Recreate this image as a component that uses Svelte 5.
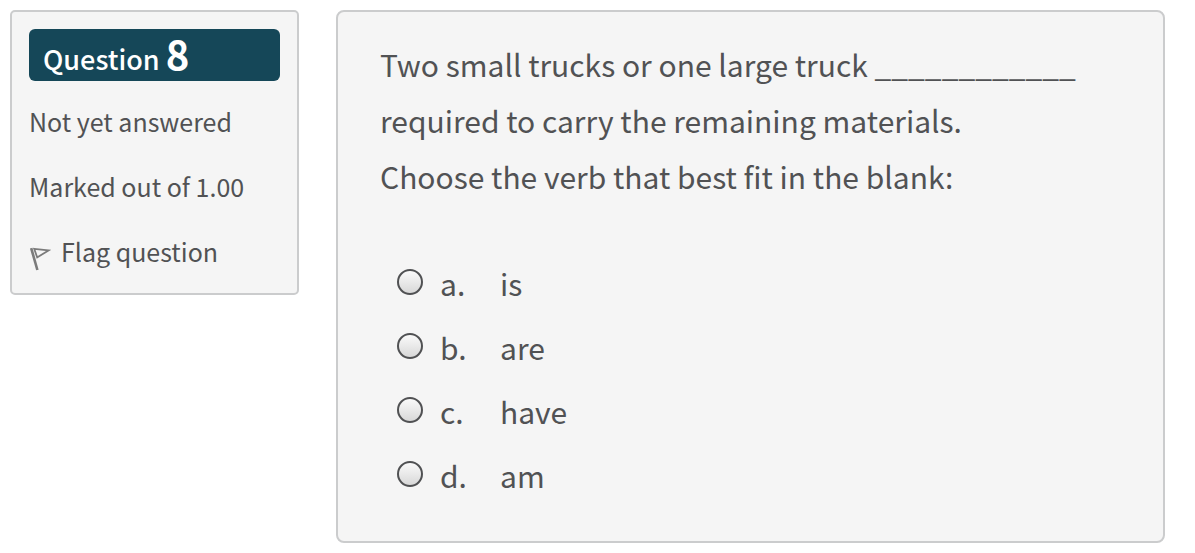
<script>
  const answers = [
    { letter: 'a.', text: 'is' },
    { letter: 'b.', text: 'are' },
    { letter: 'c.', text: 'have' },
    { letter: 'd.', text: 'am' }
  ];
  let selected = $state(null);
</script>

<main class="question">
  <aside class="info">
    <h3 class="number">Question <span>8</span></h3>
    <p>Not yet answered</p>
    <p>Marked out of 1.00</p>
    <a class="flag" href="#flag">
      <svg width="22" height="24" viewBox="0 0 22 24" aria-hidden="true">
        <path d="M2.2 1.2 8.4 23" fill="none" stroke="#7b7b7b" stroke-width="2.6" />
        <path d="M5.2 1.8 19.5 3.4 8.2 10.4Z" fill="none" stroke="#7b7b7b" stroke-width="1.8" />
      </svg>
      <span>Flag question</span>
    </a>
  </aside>

  <section class="content">
    <p class="prompt">
      Two small trucks or one large truck ____________<br />
      required to carry the remaining materials.<br />
      Choose the verb that best fit in the blank:
    </p>
    <div class="answers" role="radiogroup" aria-label="Answers">
      {#each answers as answer}
        <label class="answer">
          <input type="radio" name="answer" value={answer.text} bind:group={selected} />
          <span class="letter">{answer.letter}</span>
          <span>{answer.text}</span>
        </label>
      {/each}
    </div>
  </section>
</main>

<style>
  :global(body) {
    margin: 0;
    background: #fff;
  }

  .question {
    display: grid;
    grid-template-columns: 289px minmax(0, 1fr);
    align-items: start;
    column-gap: 37px;
    padding: 10px 30px 10px 10px;
    color: #515254;
    font-family: 'Noto Sans CJK SC', 'Noto Sans', sans-serif;
  }

  .info,
  .content {
    box-sizing: border-box;
    border: 2px solid #cbcccd;
    background: #f5f5f5;
  }

  .info {
    display: flex;
    flex-direction: column;
    gap: 25px;
    padding: 17px 17px 22px;
    border-radius: 5px;
    font-size: 25px;
    line-height: 40px;
  }

  .info p {
    margin: 0;
  }

  .number {
    margin: 0 0 -5px;
    padding: 8px 14px 0;
    border-radius: 6px;
    background: #154758;
    color: #fff;
    font-size: 27px;
    font-weight: 500;
    line-height: 44px;
  }

  .number span {
    font-size: 40px;
    font-weight: 700;
    line-height: 30px;
  }

  .flag {
    display: flex;
    align-items: center;
    gap: 10px;
    color: inherit;
    text-decoration: none;
  }

  .flag svg {
    flex: none;
    margin-top: 16px;
  }

  .content {
    padding: 24px 42px 34px;
    border-radius: 8px;
    font-size: 30px;
    line-height: 56px;
  }

  .prompt {
    margin: 0 0 47px;
  }

  .answers {
    padding-left: 17px;
  }

  .answer {
    display: flex;
    align-items: center;
    height: 64px;
  }

  .answer input {
    appearance: none;
    box-sizing: border-box;
    flex: none;
    width: 26px;
    height: 26px;
    margin: 0 17px 2px 0;
    border: 2px solid #505153;
    border-radius: 50%;
    background: linear-gradient(#fafafa, #d8d8d8);
  }

  .answer input:checked {
    background: radial-gradient(circle, #505153 5px, #ececec 6px);
  }

  .letter {
    width: 60px;
  }
</style>
